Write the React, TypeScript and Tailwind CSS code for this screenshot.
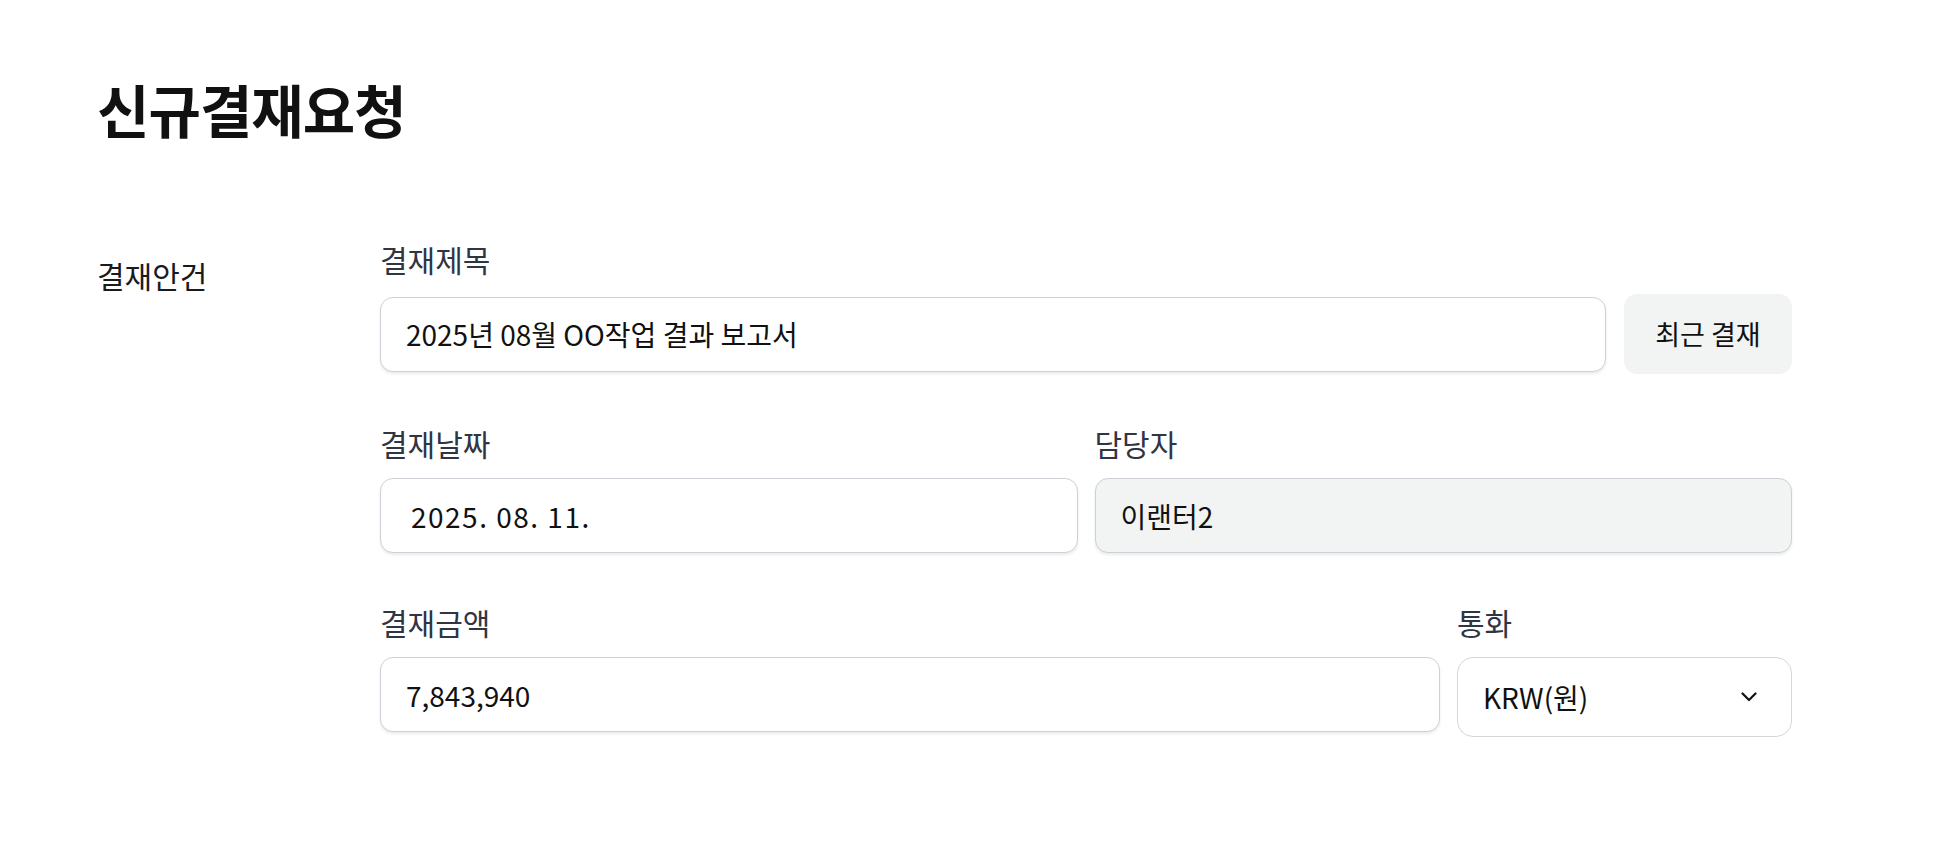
import React from "react";

function Label({ children }: { children: React.ReactNode }) {
  return (
    <div className="mb-[16px] text-[30px] leading-[38px] text-[#2f3542]">{children}</div>
  );
}

const inputCls =
  "h-[75px] w-full rounded-[13px] border border-[#ccd1d7] px-[25px] text-[28px] text-[#111] shadow-[0_2px_3px_rgba(0,0,0,0.08)] outline-none";

export default function App() {
  return (
    <div className="min-h-screen bg-white pl-[97px] pt-[80px] [font-family:'Noto_Sans_CJK_KR',sans-serif]">
      <h1 className="h-[57px] text-[57px] font-bold leading-none tracking-[-1px] text-[#111]">
        신규결재요청
      </h1>

      <div className="mt-[103px] flex">
        <div className="w-[283px] pt-[14px] text-[30px] leading-[42px] text-[#1a1a1a]">
          결재안건
        </div>

        <div className="flex w-[1412px] flex-col gap-[50px]">
          <div>
            <Label>결재제목</Label>
            <div className="flex items-center gap-[18px]">
              <input
                readOnly
                className={`${inputCls} bg-white`}
                value="2025년 08월 OO작업 결과 보고서"
              />
              <button className="h-[80px] w-[168px] shrink-0 rounded-[13px] bg-[#f2f3f3] text-[27px] text-[#111]">
                최근 결재
              </button>
            </div>
          </div>

          <div className="grid grid-cols-2 gap-[17px]">
            <div>
              <Label>결재날짜</Label>
              <input
                readOnly
                className={`${inputCls} bg-white pl-[30px] tracking-[1.5px]`}
                value="2025. 08. 11."
              />
            </div>
            <div>
              <Label>담당자</Label>
              <input readOnly className={`${inputCls} bg-[#f2f3f3]`} value="이랜터2" />
            </div>
          </div>

          <div className="flex items-start gap-[17px]">
            <div className="flex-1">
              <Label>결재금액</Label>
              <input readOnly className={`${inputCls} bg-white`} value="7,843,940" />
            </div>
            <div className="w-[335px] shrink-0">
              <Label>통화</Label>
              <div className="flex h-[80px] items-center justify-between rounded-[16px] border border-[#d3d7dc] bg-white pl-[25px] pr-[34px] text-[28px] text-[#111]">
                <span>KRW(원)</span>
                <svg width="16" height="10" viewBox="0 0 16 10" fill="none">
                  <polyline
                    points="1.5,1.5 8,8 14.5,1.5"
                    stroke="#111"
                    strokeWidth="2.2"
                    strokeLinecap="round"
                    strokeLinejoin="round"
                  />
                </svg>
              </div>
            </div>
          </div>
        </div>
      </div>
    </div>
  );
}
